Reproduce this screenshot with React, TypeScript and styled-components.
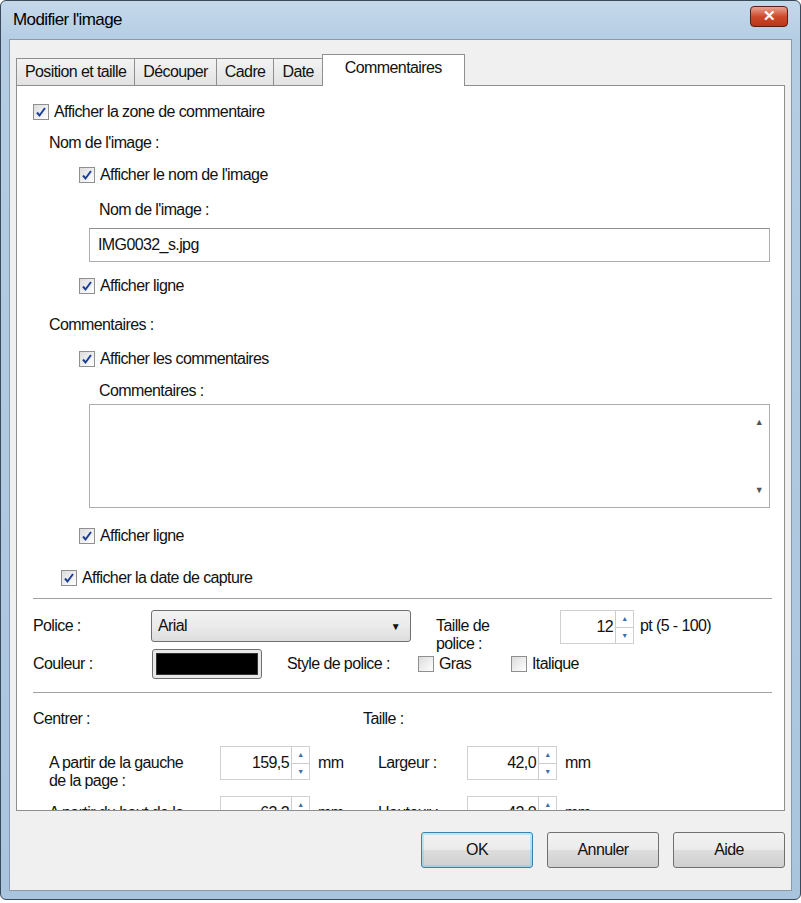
import React from "react";
import styled, { createGlobalStyle } from "styled-components";

const G = createGlobalStyle`
  html,body{margin:0;padding:0;background:#fff;}
  *{box-sizing:border-box;}
  body{font-family:"Liberation Sans",Arial,sans-serif;font-size:16px;color:#111;letter-spacing:-0.6px;}
`;

const Win = styled.div`
  width:801px;height:900px;border:1px solid #3a4a5a;border-radius:6px;
  background:linear-gradient(#c4d8ea,#b4cde3 40px,#a9c5de);
  padding:0 8px 8px 8px;display:flex;flex-direction:column;
`;
const Title = styled.div`
  height:38px;display:flex;align-items:center;justify-content:space-between;padding:0 4px;
  font-size:17px;color:#000;
`;
const Close = styled.div`
  width:38px;height:21px;border:1px solid #5a1d12;border-radius:4px;
  background:linear-gradient(#e9a593,#cf4a2c 50%,#b9361a);
  display:flex;align-items:center;justify-content:center;color:#fff;font-weight:bold;font-size:15px;
  margin-top:-8px;
`;
const Body = styled.div`
  flex:1;background:#f0f0f0;border:1px solid #8a9aab;padding:14px 6px 0 6px;display:flex;flex-direction:column;
`;
const Tabs = styled.div`display:flex;align-items:flex-end;height:32px;padding-left:0;`;
const Tab = styled.div<{active?:boolean}>`
  height:${p=>p.active?32:28}px;padding:0 ${p=>p.active?22:8}px;display:flex;align-items:center;
  border:1px solid #8e8f8f;border-bottom:${p=>p.active?"none":"1px solid #8e8f8f"};margin-right:-1px;
  background:${p=>p.active?"#fff":"linear-gradient(#f3f3f3,#e2e2e2)"};position:relative;z-index:${p=>p.active?2:1};
  align-self:flex-end;padding-bottom:${p=>p.active?6:0}px;
`;
const Panel = styled.div`
  background:#fff;border:1px solid #8e8f8f;margin-top:-1px;height:726px;padding:10px 14px 0 16px;
  display:flex;flex-direction:column;overflow:hidden;
`;
const Row = styled.div<{indent?:number;h?:number}>`
  display:flex;align-items:center;margin-left:${p=>p.indent||0}px;height:${p=>p.h||32}px;flex:none;
`;
const Box = styled.span`
  width:16px;height:16px;border:1px solid #8f8f8f;background:linear-gradient(135deg,#dcdcdc,#fff);
  display:inline-flex;align-items:center;justify-content:center;margin-right:5px;flex:none;
`;
const Input = styled.div`
  height:34px;border:1px solid #abadb3;border-top-color:#8f9196;background:#fff;flex:none;
  display:flex;align-items:center;padding-left:8px;margin-left:56px;margin-right:0;
`;
const Area = styled.div`
  height:104px;border:1px solid #abadb3;margin-left:56px;display:flex;justify-content:flex-end;flex:none;
`;
const Scroll = styled.div`
  width:20px;display:flex;flex-direction:column;justify-content:space-between;align-items:center;
  padding:12px 0;font-size:9px;color:#555;
`;
const Sep = styled.div`height:2px;border-top:1px solid #a0a0a0;border-bottom:1px solid #fff;margin:10px -2px 10px 0;flex:none;`;
const Lbl = styled.span<{w?:number}>`width:${p=>p.w?p.w+"px":"auto"};flex:none;line-height:18px;`;
const Select = styled.div`
  width:260px;height:32px;border:1px solid #707070;border-radius:3px;background:linear-gradient(#f2f2f2,#ebebeb 50%,#dddddd);
  display:flex;align-items:center;justify-content:space-between;padding:0 10px 0 6px;
`;
const Swatch = styled.div`
  width:110px;height:30px;border:1px solid #707070;border-radius:3px;background:#e8e8e8;padding:3px;
  & > div{background:#000;height:100%;border:1px solid #333;}
`;
const Spin = styled.div<{w:number}>`
  width:${p=>p.w}px;height:34px;border:1px solid #d0d0d0;background:#fff;display:flex;flex:none;
`;
const SpinVal = styled.div`flex:1;display:flex;align-items:center;justify-content:flex-end;padding-right:2px;`;
const SpinBtns = styled.div`
  width:18px;display:flex;flex-direction:column;border-left:1px solid #ccc;
  & > span{flex:1;display:flex;align-items:center;justify-content:center;font-size:7px;color:#3c6fa8;}
  & > span:first-child{border-bottom:1px solid #ccc;}
`;
const Footer = styled.div`display:flex;justify-content:flex-end;gap:14px;padding:21px 0 0 0;`;
const Btn = styled.div<{def?:boolean}>`
  width:112px;height:36px;border:1px solid ${p=>p.def?"#3c7fb1":"#707070"};border-radius:3px;
  background:linear-gradient(#f2f2f2,#ebebeb 50%,#dddddd 51%,#cfcfcf);
  box-shadow:${p=>p.def?"inset 0 0 0 2px #48d6fb55":"none"};
  display:flex;align-items:center;justify-content:center;
`;

const Check = ({ on }: { on?: boolean }) => (
  <Box>{on && <svg width="12" height="12" viewBox="0 0 12 12"><path d="M2 6.5l2.5 3L10 2" stroke="#1c3f94" strokeWidth="2" fill="none"/></svg>}</Box>
);
const CB = ({ indent, label, on = true, h }: { indent?: number; label: string; on?: boolean; h?: number }) => (
  <Row indent={indent} h={h}><Check on={on} /><span>{label}</span></Row>
);
const SpinBox = ({ v, w }: { v: string; w: number }) => (
  <Spin w={w}><SpinVal>{v}</SpinVal><SpinBtns><span>▲</span><span>▼</span></SpinBtns></Spin>
);

export default function App() {
  return (
    <Win>
      <G />
      <Title><span>Modifier l'image</span><Close>✕</Close></Title>
      <Body>
        <Tabs>
          <Tab>Position et taille</Tab><Tab>Découper</Tab><Tab>Cadre</Tab><Tab>Date</Tab><Tab active>Commentaires</Tab>
        </Tabs>
        <Panel>
          <CB label="Afficher la zone de commentaire" />
          <Row indent={16} h={30}>Nom de l'image :</Row>
          <CB indent={46} label="Afficher le nom de l'image" h={34} />
          <Row indent={66} h={36}>Nom de l'image :</Row>
          <Input>IMG0032_s.jpg</Input>
          <CB indent={46} label="Afficher ligne" h={48} />
          <Row indent={16} h={30}>Commentaires :</Row>
          <CB indent={46} label="Afficher les commentaires" h={38} />
          <Row indent={66} h={26}>Commentaires :</Row>
          <Area><Scroll><span>▲</span><span>▼</span></Scroll></Area>
          <CB indent={46} label="Afficher ligne" h={56} />
          <CB indent={28} label="Afficher la date de capture" h={28} />
          <Sep style={{marginTop:6}} />
          <Row h={34} style={{alignItems:"flex-start"}}>
            <Lbl w={118} style={{marginTop:7}}>Police :</Lbl>
            <Select><span>Arial</span><span style={{fontSize:10}}>▼</span></Select>
            <Lbl w={124} style={{marginLeft:25,marginTop:7}}>Taille de<br/>police :</Lbl>
            <SpinBox v="12" w={74} />
            <Lbl style={{marginLeft:6,marginTop:7}}>pt (5 - 100)</Lbl>
          </Row>
          <Row h={40}>
            <Lbl w={119}>Couleur :</Lbl>
            <Swatch><div /></Swatch>
            <Lbl w={131} style={{marginLeft:25}}>Style de police :</Lbl>
            <Check /><Lbl w={72}>Gras</Lbl>
            <Check /><Lbl>Italique</Lbl>
          </Row>
          <Sep style={{marginTop:8}} />
          <Row h={30}><Lbl w={330}>Centrer :</Lbl><Lbl>Taille :</Lbl></Row>
          <Row indent={16} h={62} style={{alignItems:"flex-start",paddingTop:12}}>
            <Lbl w={171} style={{marginTop:8}}>A partir de la gauche<br/>de la page :</Lbl>
            <SpinBox v="159,5" w={90} />
            <Lbl w={60} style={{marginLeft:8,marginTop:8}}>mm</Lbl>
            <Lbl w={89} style={{marginTop:8}}>Largeur :</Lbl>
            <SpinBox v="42,0" w={90} />
            <Lbl style={{marginLeft:8,marginTop:8}}>mm</Lbl>
          </Row>
          <Row indent={16} h={60} style={{alignItems:"flex-start"}}>
            <Lbl w={171} style={{marginTop:8}}>A partir du haut de la<br/>page :</Lbl>
            <SpinBox v="63,2" w={90} />
            <Lbl w={60} style={{marginLeft:8,marginTop:8}}>mm</Lbl>
            <Lbl w={89} style={{marginTop:8}}>Hauteur :</Lbl>
            <SpinBox v="42,0" w={90} />
            <Lbl style={{marginLeft:8,marginTop:8}}>mm</Lbl>
          </Row>
        </Panel>
        <Footer><Btn def>OK</Btn><Btn>Annuler</Btn><Btn>Aide</Btn></Footer>
      </Body>
    </Win>
  );
}
